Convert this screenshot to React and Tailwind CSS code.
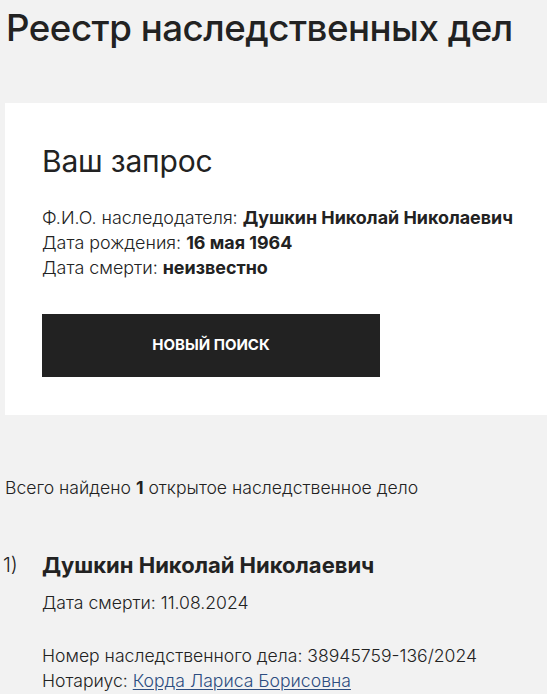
export default function App() {
  return (
    <div className="min-h-[694px] bg-[#f2f2f2] text-[#222] font-['Inter',Arial,sans-serif] overflow-hidden">
      <h1 className="pl-[6px] pt-[6px] text-[36.7px] leading-[44px] font-medium text-[#222] tracking-[-0.5px] whitespace-nowrap">Реестр наследственных дел</h1>
      <div className="ml-[5px] mt-[53px] bg-white pl-[37px] pt-[40px] pb-[38px]">
        <h2 className="text-[30px] leading-[36px] text-[#222] tracking-[-0.2px]">Ваш запрос</h2>
        <div className="mt-[26px] text-[17.9px] leading-[25px] text-[#222] font-light whitespace-nowrap">
          <div>Ф.И.О. наследодателя: <b className="font-bold">Душкин Николай Николаевич</b></div>
          <div>Дата рождения: <b className="font-bold">16 мая 1964</b></div>
          <div>Дата смерти: <b className="font-bold">неизвестно</b></div>
        </div>
        <button className="mt-[34px] w-[338px] h-[63px] bg-[#222] text-white text-[15px] font-bold flex items-center justify-center">НОВЫЙ ПОИСК</button>
      </div>
      <div className="pl-[5px] mt-[60px] text-[17.6px] leading-[25px] font-light">Всего найдено <b className="font-bold">1</b> открытое наследственное дело</div>
      <div className="mt-[50px] flex text-[17.6px] font-light">
        <div className="w-[42px] pl-[3px] text-[20px] leading-[30px]">1)</div>
        <div>
          <div className="text-[22px] leading-[30px] font-bold">Душкин Николай Николаевич</div>
          <div className="mt-[10px] leading-[25px]">Дата смерти: 11.08.2024</div>
          <div className="mt-[28px] leading-[25px]">Номер наследственного дела: 38945759-136/2024</div>
          <div className="leading-[25px]">Нотариус: <a href="#" className="text-[#2d4d80] underline underline-offset-2">Корда Лариса Борисовна</a></div>
        </div>
      </div>
    </div>
  );
}
